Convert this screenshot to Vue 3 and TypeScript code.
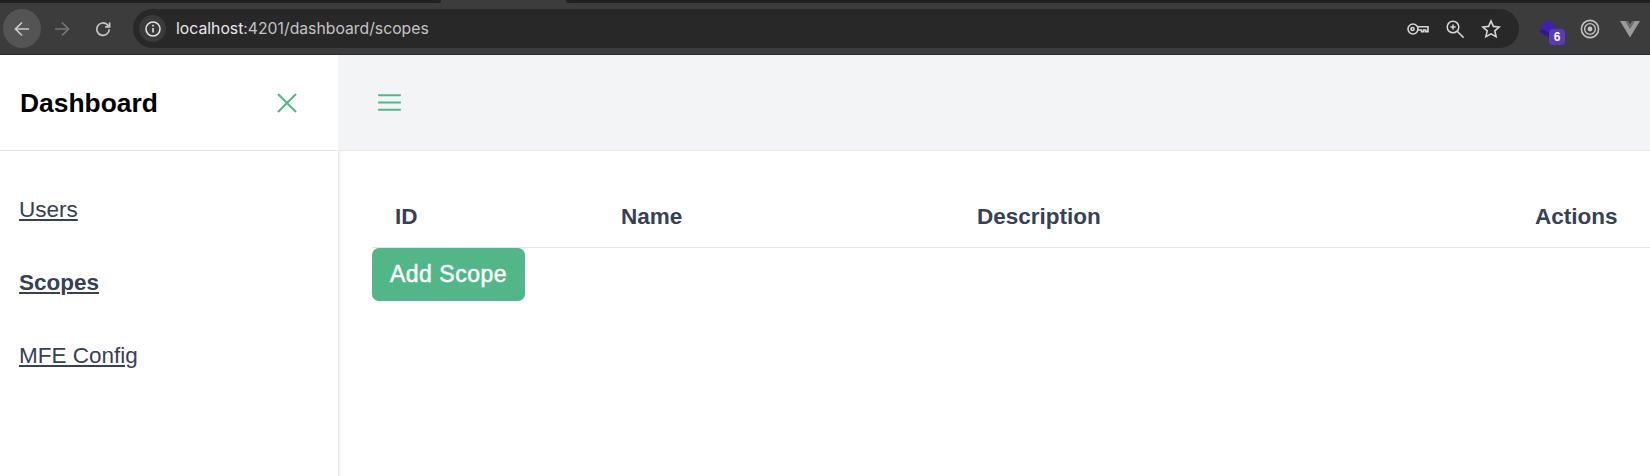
<script setup lang="ts">
const navLinks = [
  { label: 'Users', active: false },
  { label: 'Scopes', active: true },
  { label: 'MFE Config', active: false },
];

const columns = ['ID', 'Name', 'Description', 'Actions'];
</script>

<template>
  <div class="window">
    <div class="tab-strip">
      <div class="strip-left"></div>
      <div class="strip-tab"></div>
      <div class="strip-right"></div>
    </div>

    <header class="toolbar">
      <button class="nav-btn back">
        <svg width="22" height="22" viewBox="0 0 22 22" fill="none" stroke="#c8c8c8" stroke-width="1.7">
          <path d="M18 11H4.5M11 4.5 4.5 11l6.5 6.5" />
        </svg>
      </button>
      <button class="nav-btn">
        <svg width="22" height="22" viewBox="0 0 22 22" fill="none" stroke="#767676" stroke-width="1.7">
          <path d="M4 11h13.5M11 4.5l6.5 6.5-6.5 6.5" />
        </svg>
      </button>
      <button class="nav-btn reload">
        <svg width="22" height="22" viewBox="0 0 22 22" fill="none" stroke="#c8c8c8" stroke-width="1.7">
          <path d="M17.2 11.2a6.2 6.2 0 1 1-1.9-4.5l2 1.9" />
          <path d="M17.6 4.4v4.5h-4.5" />
        </svg>
      </button>

      <div class="omnibox">
        <span class="site-chip">
          <svg width="18" height="18" viewBox="0 0 18 18" fill="none" stroke="#e3e3e3" stroke-width="1.6">
            <circle cx="9" cy="9" r="7" />
            <path d="M9 8v4.6" />
            <path d="M9 4.8v1.8" />
          </svg>
        </span>
        <span class="url"><span class="host">localhost</span>:4201/dashboard/scopes</span>
        <div class="omni-icons">
          <svg class="key" width="22" height="14" viewBox="0 0 22 14" fill="none" stroke="#d6d6d6" stroke-width="1.6">
            <circle cx="6" cy="7" r="5" />
            <circle cx="5.5" cy="7" r="1.5" />
            <path d="M11 4.8h10v4.8h-2.2V8h-2v1.6h-2.2V8h-4" />
          </svg>
          <svg class="zoom" width="20" height="20" viewBox="0 0 20 20" fill="none" stroke="#d6d6d6" stroke-width="1.5">
            <circle cx="8" cy="8" r="5.8" />
            <path d="M5.4 8h5.2M8 5.4v5.2" />
            <path d="m12.2 12.2 6.4 6.4" />
          </svg>
          <svg class="star" width="20" height="20" viewBox="0 0 20 20" fill="none" stroke="#d6d6d6" stroke-width="1.6">
            <path d="m10 2 2.4 5.4 5.8.6-4.4 3.9 1.3 5.8L10 14.8l-5.1 2.9 1.3-5.8L1.8 8l5.8-.6z" />
          </svg>
        </div>
      </div>

      <div class="extensions">
        <span class="ext">
          <svg width="26" height="22" viewBox="0 0 26 22">
            <path d="M2 13.5 11 19l9-5.5-3-2H5z" fill="#2e1790" />
            <path d="M2 8.5 11 2l9 6.5-9 6z" fill="#4020b0" />
          </svg>
          <span class="badge">6</span>
        </span>
        <span class="ext">
          <svg width="20" height="20" viewBox="0 0 20 20" fill="none" stroke="#c4c4c4">
            <circle cx="10" cy="10" r="8.6" stroke-width="1.6" />
            <circle cx="10" cy="10" r="5.4" stroke-width="1.4" />
            <circle cx="10" cy="10" r="2.4" fill="#c4c4c4" stroke="none" />
          </svg>
        </span>
        <span class="ext">
          <svg width="20" height="18" viewBox="0 0 20 18">
            <path d="M0 1h5.5L10 8.5 14.5 1H20L10 17.5z" fill="#9a9a9a" />
            <path d="M5.5 1H8l2 3.5L12 1h2.500L10 8.500z" fill="#6d6d6d" />
          </svg>
        </span>
      </div>
    </header>

    <div class="page">
      <aside class="sidebar">
        <div class="sidebar-head">
          <h1>Dashboard</h1>
          <svg width="36" height="36" viewBox="0 0 24 24" fill="none" stroke="#52b788" stroke-width="1.4">
            <path d="M6 18 18 6M6 6l12 12" />
          </svg>
        </div>
        <nav class="side-nav">
          <a v-for="link in navLinks" :key="link.label" href="#" :class="{ active: link.active }">{{ link.label }}</a>
        </nav>
      </aside>

      <main class="main">
        <div class="topbar">
          <svg width="33" height="33" viewBox="0 0 24 24" fill="none" stroke="#52b788" stroke-width="1.5">
            <path d="M3.75 6.75h16.5M3.75 12h16.5m-16.5 5.25h16.5" />
          </svg>
        </div>
        <section class="content">
          <div class="table-head">
            <div v-for="col in columns" :key="col" class="th">{{ col }}</div>
          </div>
          <button class="add-btn">Add Scope</button>
        </section>
      </main>
    </div>
  </div>
</template>

<style>
html,
body {
  margin: 0;
  background: #fff;
  overflow: hidden;
}
</style>

<style scoped>
.window {
  width: 1650px;
  height: 476px;
  display: flex;
  flex-direction: column;
  font-family: 'Liberation Sans', Arial, sans-serif;
  overflow: hidden;
}

.tab-strip {
  display: flex;
  height: 3px;
  background: #3c3c3c;
}

.strip-left {
  width: 441px;
  background: #202020;
  border-bottom-right-radius: 3px;
}

.strip-tab {
  width: 125px;
}

.strip-right {
  flex: 1;
  background: #202020;
  border-bottom-left-radius: 3px;
}

.toolbar {
  box-sizing: border-box;
  height: 52px;
  background: #3c3c3c;
  border-bottom: 1px solid #2b2b2b;
  display: flex;
  align-items: center;
  padding-left: 3px;
  gap: 2px;
}

.nav-btn {
  width: 38px;
  height: 39px;
  padding: 0;
  border: none;
  background: transparent;
  display: flex;
  align-items: center;
  justify-content: center;
}

.nav-btn.back {
  background: #545454;
  border-radius: 50%;
}

.nav-btn.reload {
  margin-left: 1px;
}

.omnibox {
  flex: 1;
  height: 39px;
  margin-left: 9px;
  margin-right: 9px;
  padding: 0 10px 0 6px;
  background: #282828;
  border-radius: 20px;
  display: flex;
  align-items: center;
}

.site-chip {
  width: 27px;
  height: 27px;
  border-radius: 50%;
  background: #3a3a3a;
  display: flex;
  align-items: center;
  justify-content: center;
}

.url {
  margin-left: 10px;
  font-family: Inter, 'Liberation Sans', sans-serif;
  font-size: 15.75px;
  color: #c4c4c4;
}

.host {
  color: #e8e8e8;
}

.omni-icons {
  margin-left: auto;
  display: flex;
  align-items: center;
  gap: 16px;
  padding-right: 8px;
}

.extensions {
  display: flex;
}

.ext {
  position: relative;
  width: 40px;
  height: 39px;
  display: flex;
  align-items: center;
  justify-content: center;
}

.badge {
  position: absolute;
  left: 19px;
  top: 20px;
  width: 16px;
  height: 16px;
  border-radius: 4px;
  background: #5a3ab8;
  color: #fff;
  font-size: 12px;
  font-weight: 700;
  line-height: 16px;
  text-align: center;
}

.page {
  flex: 1;
  display: flex;
  min-height: 0;
}

.sidebar {
  width: 338px;
  flex-shrink: 0;
  background: #fff;
}

.sidebar-head {
  box-sizing: border-box;
  height: 96px;
  padding: 1px 33px 0 20px;
  border-bottom: 1px solid #e5e7eb;
  display: flex;
  align-items: center;
  justify-content: space-between;
}

.sidebar-head h1 {
  margin: 0;
  font-size: 26.4px;
  font-weight: 700;
  color: #000;
}

.side-nav {
  display: flex;
  flex-direction: column;
  gap: 43px;
  padding: 44px 0 0 19px;
}

.side-nav a {
  font-size: 22.5px;
  line-height: 30px;
  color: #364156;
  text-decoration: underline;
}

.side-nav a.active {
  font-weight: 700;
}

.main {
  flex: 1;
  min-width: 0;
  display: flex;
  flex-direction: column;
}

.topbar {
  box-sizing: border-box;
  height: 96px;
  padding-left: 35px;
  background: #f3f4f6;
  border-bottom: 1px solid #e5e7eb;
  display: flex;
  align-items: center;
}

.content {
  flex: 1;
  padding: 34px 0 0 33px;
  border-left: 1px solid #e5e7eb;
  box-shadow: inset 5px 0 5px -3px rgba(0, 0, 0, 0.05);
}

.table-head {
  display: grid;
  grid-template-columns: 226px 356px 558px 1fr;
  padding: 17px 0 15px 23px;
  border-bottom: 1px solid #e2e8f0;
}

.th {
  font-size: 22.5px;
  line-height: 30px;
  font-weight: 700;
  color: #364156;
}

.add-btn {
  display: block;
  width: 153px;
  height: 53px;
  padding: 0;
  border: none;
  border-radius: 7px;
  background: #52b788;
  color: #fff;
  font-family: 'Liberation Sans', Arial, sans-serif;
  font-size: 23px;
  font-weight: 400;
  letter-spacing: 0.5px;
  -webkit-text-stroke: 0.5px #fff;
}
</style>
